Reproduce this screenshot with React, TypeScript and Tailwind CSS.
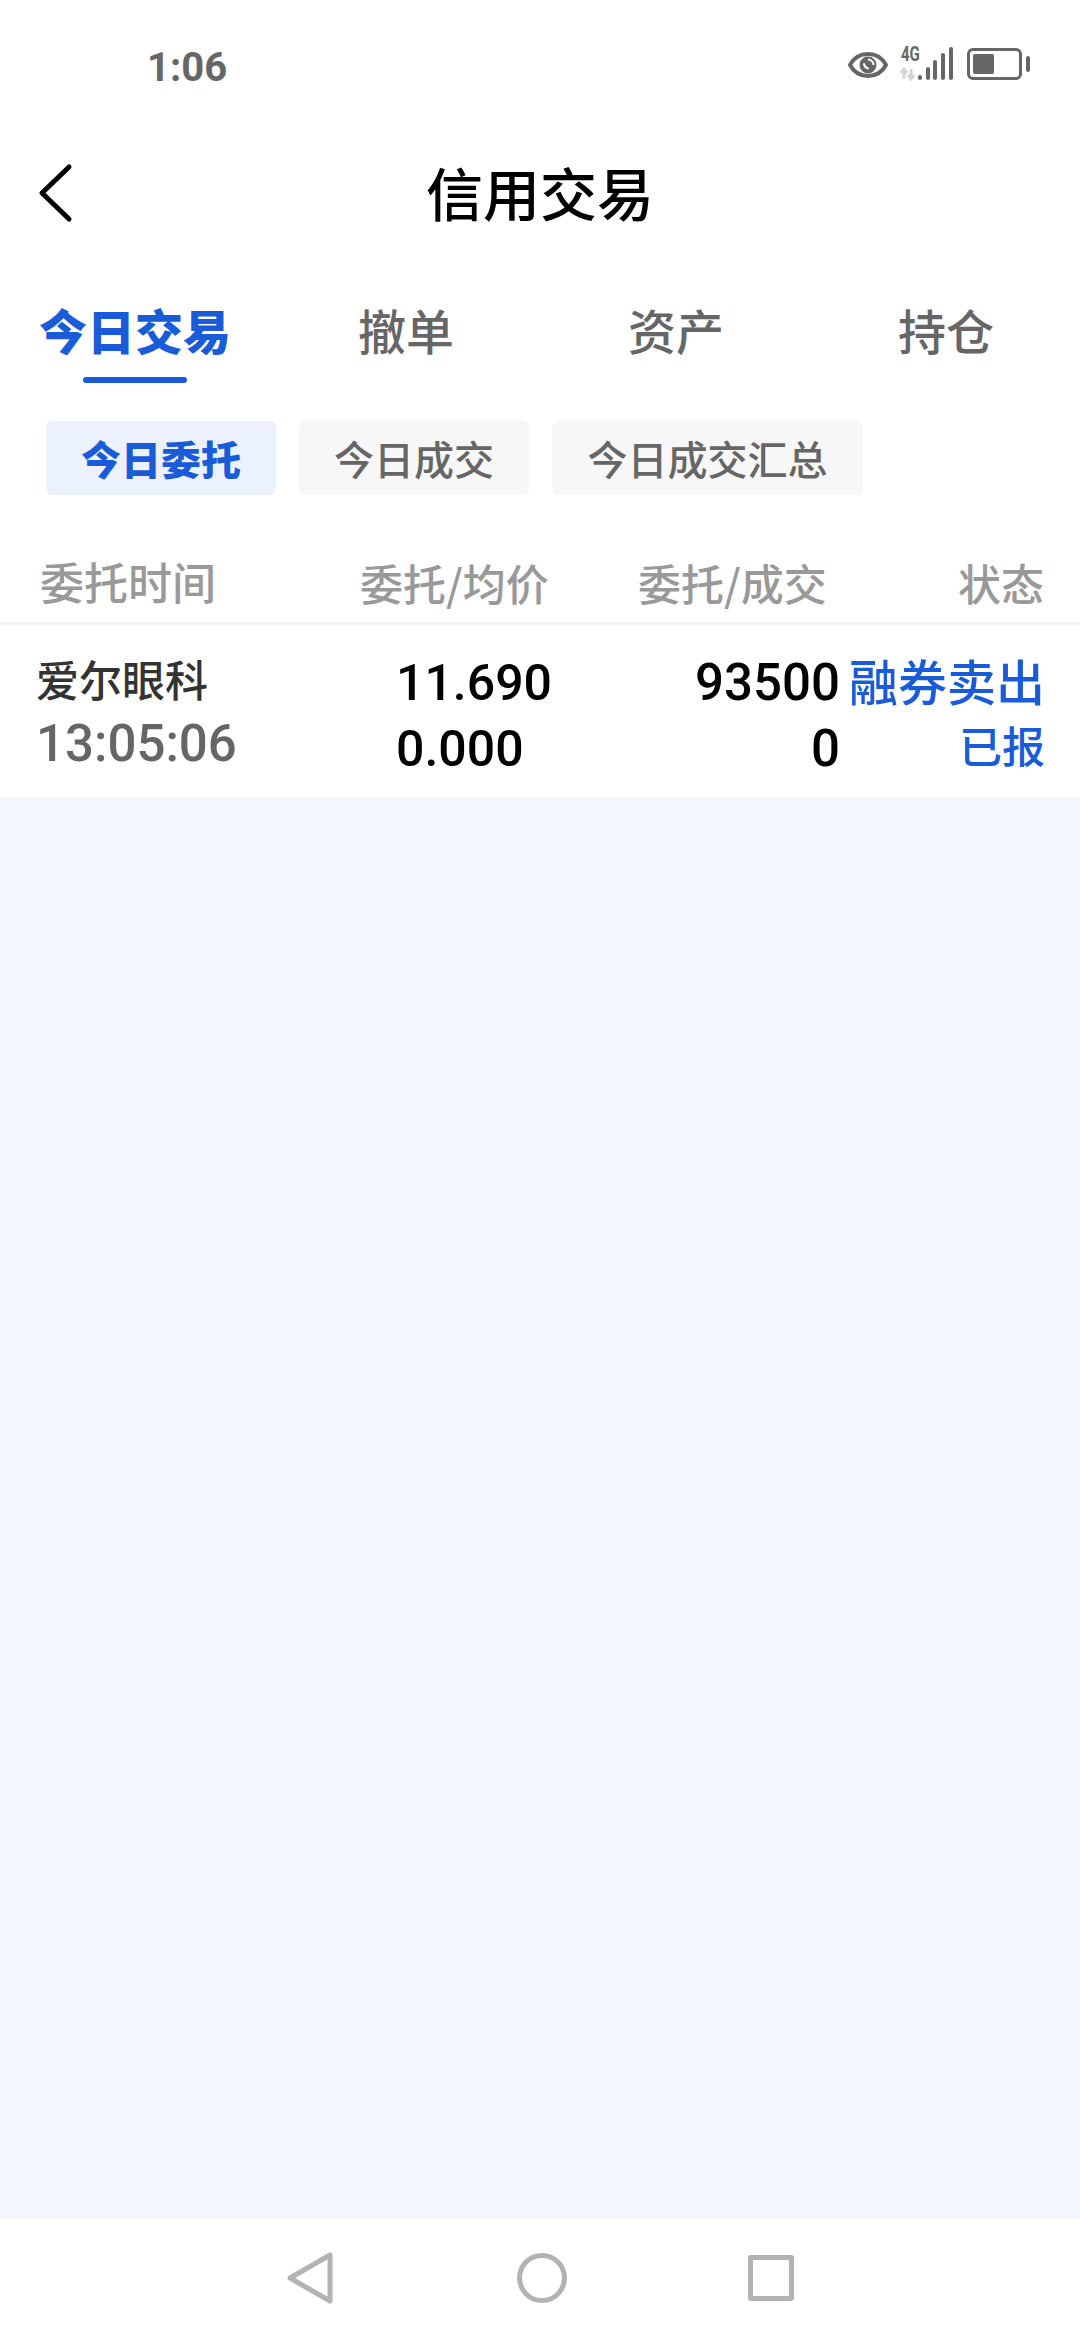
import React from 'react';

const cjk = 'font-["Noto_Sans_CJK_SC","Noto_Sans",sans-serif]';
const num = 'font-["Roboto","Noto_Sans_CJK_SC",sans-serif]';

function StatusIcons() {
  return (
    <div className="flex items-center">
      <svg width="42" height="30" viewBox="0 0 42 30" fill="none" className="mr-[10px] mt-[2px]">
        <path d="M3 15C7 7.5 13 4 21 4s14 3.500 18 11c-4 7.500-10 11-18 11S7 22.500 3 15Z" stroke="#666" strokeWidth="4" strokeLinejoin="round" />
        <circle cx="21" cy="15" r="8.500" fill="#666" />
        <path d="M21 9.500c3 0 5.500 2.500 5.500 5.500" stroke="#fff" strokeWidth="2" />
        <path d="M17 14c.5 2.500 2 4 4 4.500" stroke="#fff" strokeWidth="2" strokeLinecap="round" />
      </svg>
      <div className="relative w-[58px] h-[36px] mr-[10px]">
        <span className={`absolute left-[2px] top-[-1px] text-[20px] leading-[18px] font-bold text-[#666] scale-x-[0.75] origin-left ${num}`}>4G</span>
        <svg width="58" height="36" viewBox="0 0 58 36" className="absolute left-0 top-0">
          <path d="M5 33V24M2 27l3-4 3 4M12 23v9M9 29l3 4 3-4" stroke="#d6d6d6" strokeWidth="3" fill="none" />
          <rect x="19" y="29" width="4" height="5" rx="2" fill="#666" />
          <rect x="27" y="21" width="4" height="13" rx="2" fill="#666" />
          <rect x="34" y="14" width="4" height="20" rx="2" fill="#666" />
          <rect x="42" y="7" width="4" height="27" rx="2" fill="#666" />
          <rect x="50" y="1" width="4" height="33" rx="2" fill="#666" />
        </svg>
      </div>
      <div className="w-[55px] h-[32px] rounded-[6px] border-[3px] border-[#666] p-[3px] box-border">
        <div className="w-[21px] h-full rounded-[2px] bg-[#666]" />
      </div>
      <div className="w-[4px] h-[16px] ml-[4px] rounded-full bg-[#666]" />
    </div>
  );
}

function Tabs() {
  return (
    <div className={`flex items-start pl-[39px] text-[48px] leading-[56px] text-[#666] font-medium ${cjk}`}>
      <div className="flex flex-col items-center">
        <span className="font-black text-[#1a5cd8]">今日交易</span>
        <div className="w-[104px] h-[6px] mt-[20px] rounded-full bg-[#1a5cd8]" />
      </div>
      <span className="ml-[127px]">撤单</span>
      <span className="ml-[174px]">资产</span>
      <span className="ml-[174px]">持仓</span>
    </div>
  );
}

function SubTabs() {
  const tabCls = `h-[74px] flex items-center justify-center rounded-[6px] text-[40px] ${cjk}`;
  return (
    <div className="flex gap-[23px] pl-[46px] mt-[38px]">
      <div className={`${tabCls} w-[230px] bg-[#ebf1fd] text-[#1a5cd8] font-black`}>今日委托</div>
      <div className={`${tabCls} w-[230px] bg-[#f7f7f7] text-[#666] font-medium`}>今日成交</div>
      <div className={`${tabCls} w-[311px] bg-[#f7f7f7] text-[#666] font-medium`}>今日成交汇总</div>
    </div>
  );
}

function OrderRow() {
  return (
    <div className="flex h-[173px] bg-white">
      <div className="w-[396px] pl-[36px] pt-[28px]">
        <div className={`text-[43px] leading-[50px] font-medium text-[#333] ${cjk}`}>爱尔眼科</div>
        <div className={`text-[51px] leading-[62px] mt-[10px] font-medium text-[#666] ${num}`}>13:05:06</div>
      </div>
      <div className={`w-[240px] pt-[25px] text-[50px] leading-[66px] font-medium text-black ${num}`}>
        <div>11.690</div>
        <div>0.000</div>
      </div>
      <div className={`w-[204px] pt-[25px] text-right text-[51px] leading-[66px] font-medium text-black ${num}`}>
        <div>93500</div>
        <div>0</div>
      </div>
      <div className={`flex-1 pr-[35px] pt-[23px] text-right font-medium text-[#1a5cd8] text-[49px] leading-[64px] ${cjk}`}>
        <div className="whitespace-nowrap">融券卖出</div>
        <div className="text-[43px]">已报</div>
      </div>
    </div>
  );
}

function NavBar() {
  return (
    <div className="h-[122px] bg-white flex items-center justify-center pb-[2px]">
      <svg width="48" height="56" viewBox="0 0 48 56" fill="none">
        <path d="M44 5 4 28l40 23Z" stroke="#b3b3b3" strokeWidth="5" strokeLinejoin="round" />
      </svg>
      <div className="w-[50px] h-[50px] ml-[183px] rounded-full border-[5px] border-[#b3b3b3]" />
      <div className="w-[46px] h-[46px] ml-[181px] rounded-[3px] border-[5px] border-[#b3b3b3]" />
    </div>
  );
}

export default function App() {
  return (
    <div className="w-[1080px] h-[2340px] flex flex-col bg-[#f2f6fe] overflow-hidden">
      <div className="bg-white">
        {/* status bar */}
        <div className="h-[132px] flex items-start justify-between pl-[147px] pr-[50px] pt-[46px]">
          <span className={`text-[40px] leading-[44px] font-bold text-[#666] ${num}`}>1:06</span>
          <StatusIcons />
        </div>

        {/* title */}
        <div className="relative h-[120px] flex items-center justify-center">
          <svg width="36" height="60" viewBox="0 0 36 60" fill="none" className="absolute left-[37px] top-[31px]">
            <path d="M32 4 5 30l27 26" stroke="#000" strokeWidth="5" strokeLinecap="round" strokeLinejoin="round" />
          </svg>
          <span className={`text-[57px] font-medium text-black ${cjk}`}>信用交易</span>
        </div>

        <div className="pt-[49px]">
          <Tabs />
          <SubTabs />
        </div>

        {/* table header */}
        <div className={`flex items-end h-[130px] border-b-[3px] border-[#f2f2f2] pb-[8px] text-[43px] font-medium text-[#999] ${cjk}`}>
          <span className="w-[360px] pl-[40px] text-[44px]">委托时间</span>
          <span className="w-[278px]">委托/均价</span>
          <span className="w-[320px]">委托/成交</span>
          <span>状态</span>
        </div>

        <OrderRow />
      </div>

      <div className="flex-1" />
      <NavBar />
    </div>
  );
}
